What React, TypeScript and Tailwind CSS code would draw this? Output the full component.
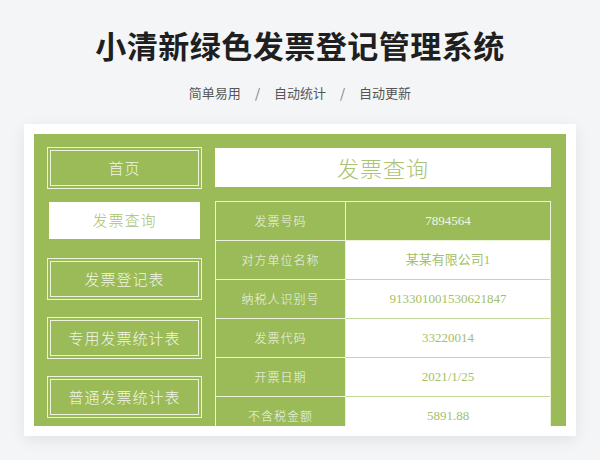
import React from 'react';

const navItems = [
  { label: '首页', active: false },
  { label: '发票查询', active: true },
  { label: '发票登记表', active: false },
  { label: '专用发票统计表', active: false },
  { label: '普通发票统计表', active: false },
];

const rows = [
  { label: '发票号码', value: '7894564', head: true },
  { label: '对方单位名称', value: '某某有限公司1' },
  { label: '纳税人识别号', value: '913301001530621847' },
  { label: '发票代码', value: '33220014' },
  { label: '开票日期', value: '2021/1/25' },
  { label: '不含税金额', value: '5891.88' },
];

const song = { fontFamily: '"Liberation Serif", "Noto Sans CJK SC", serif' };

export default function App() {
  return (
    <div
      className="w-[600px] h-[460px] bg-[#f4f5f7] overflow-hidden"
      style={{ fontFamily: '"Noto Sans CJK SC", "Noto Sans", sans-serif' }}
    >
      {/* 标题 */}
      <h1 className="pt-[24px] text-center text-[31px] leading-[42px] font-bold text-[#1f1f1f] tracking-[0.5px]">
        小清新绿色发票登记管理系统
      </h1>
      <div className="mt-[18px] flex justify-center items-center text-[13px] text-[#555] leading-[18px]">
        <span>简单易用</span>
        <span className="mx-[14px] text-[#777]">/</span>
        <span>自动统计</span>
        <span className="mx-[14px] text-[#777]">/</span>
        <span>自动更新</span>
      </div>

      {/* 卡片 */}
      <div className="mx-auto mt-[22px] w-[552px] bg-white p-[10px] shadow-[0_4px_14px_rgba(0,0,0,0.08)]">
        <div className="h-[292px] bg-[#9bbb59] flex pl-[13px] pr-[15px] overflow-hidden">
          {/* 左侧导航 */}
          <div className="w-[155px] flex flex-col">
            {navItems.map((item, i) => {
              const mt = i === 0 ? 'mt-[13px]' : i === 1 ? 'mt-[13px]' : i === 2 ? 'mt-[19px]' : 'mt-[17px]';
              if (item.active) {
                return (
                  <div
                    key={item.label}
                    className={`${mt} shrink-0 mx-[2px] h-[37px] bg-white flex items-center justify-center text-[15px] font-light text-[#a9c273] tracking-[1px]`}
                  >
                    {item.label}
                  </div>
                );
              }
              return (
                <div
                  key={item.label}
                  className={`${mt} shrink-0 h-[42px] border-[4px] border-double border-[#eef4dc] flex items-center justify-center text-[15px] font-light text-[#f2f6e6] tracking-[1px]`}
                >
                  {item.label}
                </div>
              );
            })}
          </div>

          {/* 右侧内容 */}
          <div className="ml-[13px] flex-1 flex flex-col">
            <div className="shrink-0 mt-[14px] h-[39px] bg-white flex items-center justify-center text-[22px] font-light text-[#a9c273] tracking-[1px]">
              发票查询
            </div>
            <div className="shrink-0 mt-[14px] border border-[#edf3da]">
              {rows.map((r) => (
                <div key={r.label} className="flex h-[39px]">
                  <div className="w-[130px] border-r border-b border-[#edf3da] flex items-center justify-center text-[12px] font-light text-[#f2f6e6] tracking-[1px]">
                    {r.label}
                  </div>
                  <div
                    className={`flex-1 flex items-center justify-center text-[13px] border-b ${r.head ? 'bg-[#9bbb59] text-[#f2f6e6] border-[#edf3da]' : 'bg-white text-[#a3bf68] border-[#c5d99a]'}`}
                    style={song}
                  >
                    {r.value}
                  </div>
                </div>
              ))}
            </div>
          </div>
        </div>
      </div>
    </div>
  );
}
